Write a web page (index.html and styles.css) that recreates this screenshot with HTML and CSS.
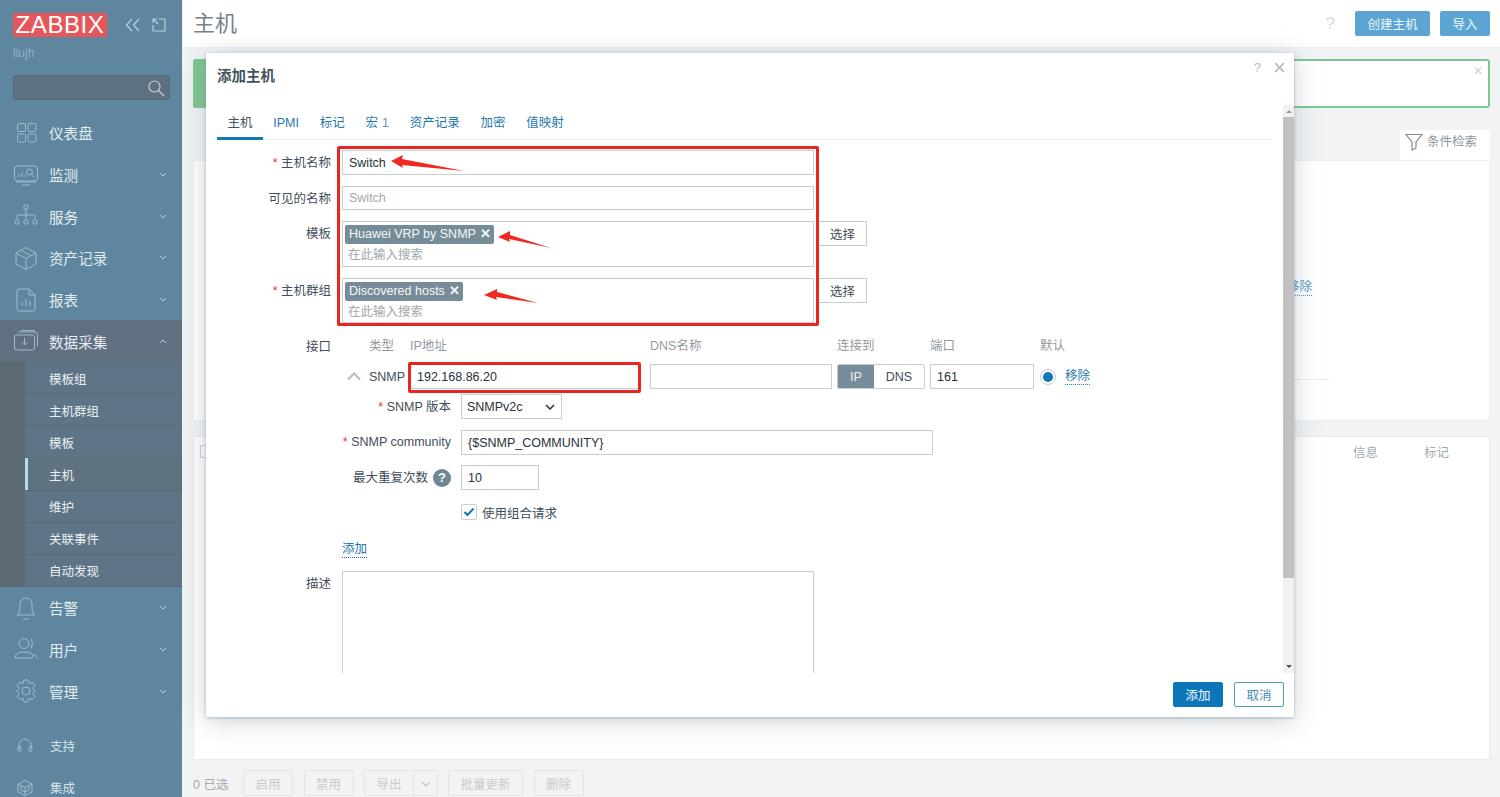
FILE: index.html
```html
<!DOCTYPE html>
<html lang="zh">
<head>
<meta charset="utf-8">
<title>主机</title>
<link rel="stylesheet" href="styles.css">
</head>
<body>
<div class="page">
  <aside class="sidebar">
    <div class="brand">
      <div class="logo">ZABBIX</div>
      <svg class="brand-ic" width="16" height="14" viewBox="0 0 16 14"><path d="M7 1 1.500 7 7 13M14 1 8.500 7 14 13"/></svg>
      <svg class="brand-ic expand" width="14" height="14" viewBox="0 0 14 14"><path d="M7 1h6v12H1V7M1 1l5 5M1 1h4M1 1v4"/></svg>
    </div>
    <div class="user">liujh</div>
    <div class="search">
      <svg width="18" height="18" viewBox="0 0 18 18"><circle cx="7.500" cy="7.500" r="5.500"/><path d="m11.500 11.500 5.500 5.500"/></svg>
    </div>
    <nav class="menu">
      <a class="mi"><svg class="ic" viewBox="0 0 24 24"><rect x="3.500" y="2.500" width="8" height="8" rx="1.500"/><rect x="14" y="2.500" width="8" height="8" rx="1.500"/><rect x="3.500" y="13" width="8" height="8" rx="1.500"/><rect x="14" y="13" width="8" height="8" rx="1.500"/></svg><span>仪表盘</span></a>
      <a class="mi"><svg class="ic" viewBox="0 0 24 24"><rect x=".5" y="3" width="23" height="15" rx="3"/><path d="M8 22h8M5 14v-3M8 14V9.500M11 14v-2M2 19h20"/><circle cx="15.500" cy="9" r="3"/><path d="m17.500 11.500 2.500 2.500"/></svg><span>监测</span><svg class="chev" viewBox="0 0 8 5"><path d="m1 1 3 3 3-3"/></svg></a>
      <a class="mi"><svg class="ic" viewBox="0 0 24 24"><rect x="10" y="1" width="4" height="4" rx="1"/><path d="M12 5v6M3 15v-3q0-1 1-1h16q1 0 1 1v3M12 11v4"/><rect x="1" y="16" width="4" height="4" rx="1"/><rect x="10" y="16" width="4" height="4" rx="1"/><rect x="19" y="16" width="4" height="4" rx="1"/></svg><span>服务</span><svg class="chev" viewBox="0 0 8 5"><path d="m1 1 3 3 3-3"/></svg></a>
      <a class="mi"><svg class="ic" viewBox="0 0 24 24"><path d="M12 1.500 22 7v11l-10 5.500L2 18V7zM2 7l10 5.500L22 7M12 12.500v11M7 4.300l10 5.500"/></svg><span>资产记录</span><svg class="chev" viewBox="0 0 8 5"><path d="m1 1 3 3 3-3"/></svg></a>
      <a class="mi"><svg class="ic" viewBox="0 0 24 24"><path d="M5 1h10l6 6v14q0 2-2 2H5q-2 0-2-2V3q0-2 2-2zM15 1v6h6M8 18v-4M12 18v-7M16 18v-5"/></svg><span>报表</span><svg class="chev" viewBox="0 0 8 5"><path d="m1 1 3 3 3-3"/></svg></a>
      <a class="mi active"><svg class="ic" viewBox="0 0 24 24"><rect x=".5" y="6" width="20" height="15" rx="2"/><path d="M4 3h17q2.500 0 2.500 2.500V17M7 1.500h14M10.500 9v7M7.500 13l3 3 3-3"/></svg><span>数据采集</span><svg class="chev" viewBox="0 0 8 5"><path d="m1 4 3-3 3 3"/></svg></a>
      <div class="sub">
        <a class="si">模板组</a>
        <a class="si">主机群组</a>
        <a class="si">模板</a>
        <a class="si cur">主机</a>
        <a class="si">维护</a>
        <a class="si">关联事件</a>
        <a class="si">自动发现</a>
      </div>
      <a class="mi"><svg class="ic" viewBox="0 0 24 24"><path d="M3 19q3-2 3-6V8a6 6 0 0 1 12 0v5q0 4 3 6zM9 22.500q3 1.500 6 0"/></svg><span>告警</span><svg class="chev" viewBox="0 0 8 5"><path d="m1 1 3 3 3-3"/></svg></a>
      <a class="mi"><svg class="ic" viewBox="0 0 24 24"><circle cx="10" cy="6.500" r="5"/><path d="M1 21q0-6 9-6t9 4q0 2-2 2zM17 1.500q3 5 0 10M20 17l3.500 4.500"/></svg><span>用户</span><svg class="chev" viewBox="0 0 8 5"><path d="m1 1 3 3 3-3"/></svg></a>
      <a class="mi"><svg class="ic" viewBox="0 0 24 24"><circle cx="12" cy="12" r="4"/><path d="M10 1h4l1 3.500 3.500-1 2.500 3-2.500 3 3 2.500-3 2.500 2.500 3-2.500 3-3.500-1-1 3.500h-4l-1-3.500-3.500 1-2.500-3 2.500-3-3-2.500 3-2.500-2.500-3 2.500-3 3.500 1z"/></svg><span>管理</span><svg class="chev" viewBox="0 0 8 5"><path d="m1 1 3 3 3-3"/></svg></a>
    </nav>
    <div class="bottom">
      <a class="bi"><svg class="ic-s" viewBox="0 0 16 16"><path d="M2 11V7a6 6 0 0 1 12 0v4"/><rect x="1" y="8.500" width="3" height="5" rx="1.500"/><rect x="12" y="8.500" width="3" height="5" rx="1.500"/></svg><span>支持</span></a>
      <a class="bi"><svg class="ic-s" viewBox="0 0 16 16"><path d="M8 .5 15 4v8l-7 3.500L1 12V4zM1 4l7 3.500L15 4M8 7.500v8M4 6v4l4 2 4-2V6"/></svg><span>集成</span></a>
    </div>
  </aside>

  <main class="main">
    <header class="topbar">
      <h1 class="title">主机</h1>
      <div class="top-actions">
        <span class="qm">?</span>
        <button class="btn-top wide">创建主机</button>
        <button class="btn-top">导入</button>
      </div>
    </header>
    <div class="content">
      <div class="msg"><i class="msg-bar"></i><span class="msg-x">✕</span></div>
      <div class="filter-tab">
        <svg width="18" height="18" viewBox="0 0 18 18"><path d="M1 1.500h16L11 9v6l-4 2V9z"/></svg>
        <span>条件检索</span>
      </div>
      <div class="filter-body">
        <span class="behind-link">移除</span>
        <i class="behind-line"></i>
      </div>
      <div class="table">
        <div class="thead"><span class="chk"></span><span class="th th1">信息</span><span class="th">标记</span></div>
      </div>
      <div class="actions">
        <span class="count">0 已选</span>
        <button class="ghost">启用</button>
        <button class="ghost">禁用</button>
        <div class="split"><button class="ghost left">导出</button><button class="ghost right"><svg width="10" height="6" viewBox="0 0 10 6"><path d="m1 1 4 4 4-4"/></svg></button></div>
        <button class="ghost long">批量更新</button>
        <button class="ghost">删除</button>
      </div>
    </div>
  </main>

  <section class="modal">
    <div class="m-head">
      <h2>添加主机</h2>
      <div class="m-tools"><span>?</span><svg width="11" height="11" viewBox="0 0 11 11"><path d="m1 1 9 9M10 1l-9 9"/></svg></div>
    </div>
    <div class="m-body">
      <div class="m-scroll">
        <div class="tabs">
          <a class="tab on">主机</a><a class="tab">IPMI</a><a class="tab">标记</a><a class="tab">宏 <em>1</em></a><a class="tab">资产记录</a><a class="tab">加密</a><a class="tab">值映射</a>
        </div>
        <div class="form">
          <div class="row"><label class="lbl"><b>*</b> 主机名称</label><div class="field"><div class="inp w472">Switch</div></div></div>
          <div class="row"><label class="lbl">可见的名称</label><div class="field"><div class="inp w472 short ph">Switch</div></div></div>
          <div class="row"><label class="lbl">模板</label><div class="field wb"><div class="multi"><span class="tag">Huawei VRP by SNMP <i>✕</i></span><span class="hint">在此输入搜索</span></div><button class="pick">选择</button></div></div>
          <div class="row"><label class="lbl"><b>*</b> 主机群组</label><div class="field wb"><div class="multi"><span class="tag">Discovered hosts <i>✕</i></span><span class="hint">在此输入搜索</span></div><button class="pick">选择</button></div></div>
          <div class="iface">
            <label class="lbl">接口</label>
            <div class="if-grid">
              <span></span><span class="h">类型</span><span class="h">IP地址</span><span class="h">DNS名称</span><span class="h">连接到</span><span class="h">端口</span><span class="h">默认</span><span></span>
              <svg class="collapse" width="14" height="9" viewBox="0 0 14 9"><path d="m1 7.500 6-6 6 6"/></svg>
              <span class="snmp">SNMP</span>
              <div class="inp ipw">192.168.86.20</div>
              <div class="inp dnsw"></div>
              <div class="seg"><span class="seg-on">IP</span><span>DNS</span></div>
              <div class="inp portw">161</div>
              <span class="radio"><i></i></span>
              <a class="link">移除</a>
            </div>
          </div>
          <div class="snmp-form">
            <label class="slbl"><b>*</b>&nbsp;SNMP 版本</label>
            <div class="sel">SNMPv2c<svg width="10" height="6" viewBox="0 0 10 6"><path d="m1 1 4 4 4-4"/></svg></div>
            <label class="slbl"><b>*</b>&nbsp;SNMP community</label>
            <div class="inp comm">{$SNMP_COMMUNITY}</div>
            <label class="slbl">最大重复次数<span class="help">?</span></label>
            <div class="inp num">10</div>
            <span></span>
            <div class="check"><span class="box"><svg width="12" height="10" viewBox="0 0 12 10"><path d="m1.500 5 3 3 6-6.500"/></svg></span>使用组合请求</div>
          </div>
          <div class="add-row"><a class="link">添加</a></div>
          <div class="row desc"><label class="lbl">描述</label><div class="field"><div class="area"></div></div></div>
        </div>
      </div>
      <div class="sbar"><i class="up"></i><div class="track"><div class="thumb"></div></div><i class="down"></i></div>
    </div>
    <div class="m-foot"><button class="primary">添加</button><button class="cancel">取消</button></div>
  </section>

  <div class="mark mark-a"></div>
  <div class="mark mark-b"></div>
  <svg class="arrows" width="1500" height="797" viewBox="0 0 1500 797">
    <polygon points="391,161 403,155 402,159 464,171 402,165 403,168"/>
    <polygon points="498,237 510,231 510,235 551,248 509,239 510,242"/>
    <polygon points="484,295 497,289 497,292 538,303 496,297 497,300"/>
  </svg>
</div>
</body>
</html>
```
FILE: styles.css
```css
* { box-sizing: border-box; }
html, body { margin: 0; height: 100%; }
body { font-family: "Liberation Sans", "Noto Sans CJK SC", sans-serif; font-size: 12.500px; color: #3b4a55; overflow: hidden; }
button { font: inherit; }
.page { position: relative; display: flex; width: 1500px; height: 797px; overflow: hidden; background: #f1f3f5; }

/* sidebar */
.sidebar { width: 183px; flex: none; height: 797px; display: flex; flex-direction: column; background: #5e879f; border-right: 1px solid #eef1f3; color: #e4ecf0; overflow: hidden; }
.sidebar > * { flex: none; }
.brand { display: flex; align-items: center; height: 24px; margin: 13px 0 0 13px; }
.logo { width: 94px; height: 24px; background: #e6575b; color: #fff; font-size: 24px; line-height: 24px; text-align: center; letter-spacing: .6px; }
.brand-ic { margin-left: 18px; fill: none; stroke: #b9ced9; stroke-width: 1.200; }
.brand-ic.expand { margin-left: 11px; }
.user { margin: 8px 0 0 13px; height: 16px; font-size: 12px; line-height: 16px; color: #93b2c3; }
.search { display: flex; align-items: center; justify-content: flex-end; width: 157px; height: 25px; margin: 14px 0 0 13px; padding-right: 4px; background: #5e7180; border: 1px solid #55697a; border-radius: 3px; }
.search svg { fill: none; stroke: #c3d2da; stroke-width: 1.200; }
.menu { margin-top: 12px; display: flex; flex-direction: column; }
.mi { display: flex; flex: none; align-items: center; height: 41.700px; padding-left: 14px; font-size: 14.600px; color: #e4ecf0; }
.mi span { margin-left: 11px; }
.mi.active { background: #607080; }
.ic { width: 24px; height: 24px; flex: none; fill: none; stroke: #a5c2d0; stroke-width: .9; }
.chev { width: 8px; height: 5px; margin-left: auto; margin-right: 15px; fill: none; stroke: #bdd0da; stroke-width: 1; }
.sub { display: flex; flex: none; flex-direction: column; padding-left: 25px; background: #5c6a73; }
.si { display: flex; flex: none; align-items: center; height: 32.100px; padding: 1px 0 0 24px; background: #5f7587; border-bottom: 1px solid #596a79; color: #eaf0f3; font-size: 12.500px; }
.si.cur { background: #5f7280; box-shadow: inset 3px 0 0 #b5dcf0; }
.bottom { margin-top: 13px; display: flex; flex-direction: column; }
.bi { display: flex; flex: none; align-items: center; height: 42px; padding-left: 17px; font-size: 12.500px; color: #d6e2e8; }
.bi span { margin-left: 17px; }
.ic-s { width: 16px; height: 16px; flex: none; fill: none; stroke: #a5c2d0; stroke-width: .9; }

/* main */
.main { flex: 1; min-width: 0; display: flex; flex-direction: column; }
.topbar { display: flex; align-items: center; justify-content: space-between; height: 48px; flex: none; padding: 0 10px; background: #fff; border-bottom: 1px solid #ebeef0; }
.title { margin: 0; font-size: 22px; font-weight: 400; line-height: 1; color: #76838c; }
.top-actions { display: flex; align-items: center; }
.qm { font-size: 17px; color: #d5dadd; margin-right: 20px; }
.btn-top { width: 50px; height: 25px; padding: 0; margin-left: 10px; border: 0; border-radius: 2px; background: #5ca5d3; color: #eef6fb; }
.btn-top.wide { width: 75px; margin-left: 0; }
.content { flex: 1; display: flex; flex-direction: column; padding: 11px 10px 0; }
.msg { position: relative; height: 49px; flex: none; background: #fff; border: 2px solid #7cc68f; border-radius: 3px; }
.msg-bar { position: absolute; left: -2px; top: -2px; bottom: -2px; width: 14px; background: #7cc68f; border-radius: 3px 0 0 3px; }
.msg-x { position: absolute; right: 5px; top: 3px; font-size: 12px; color: #c9d2d8; }
.filter-tab { align-self: flex-end; display: flex; align-items: flex-start; gap: 4px; width: 90px; height: 30px; margin-top: 22px; padding: 3px 0 0 5px; background: #fff; color: #8a959c; flex: none; line-height: 18px; }
.filter-tab svg { fill: none; stroke: #7e8d96; stroke-width: 1.200; flex: none; }
.filter-body { position: relative; height: 261px; flex: none; background: #fff; border: 1px solid #eceff1; }
.behind-link { position: absolute; left: 1093px; top: 118px; color: #4e96c8; border-bottom: 1px dotted #4e96c8; line-height: 16px; }
.behind-line { position: absolute; left: 1100px; right: 160px; top: 218px; height: 1px; background: #eceff1; }
.table { height: 324px; margin-top: 15px; flex: none; background: #fff; border: 1px solid #e9ecee; }
.thead { display: flex; align-items: center; height: 29px; color: #a2abb2; padding-right: 40px; }
.chk { width: 13px; height: 13px; margin-left: 6px; border: 1px solid #c9d0d5; background: #fff; }
.th1 { margin-left: auto; margin-right: 46px; }
.actions { display: flex; align-items: center; margin-top: 10px; color: #a2abb2; }
.count { width: 50px; flex: none; }
.ghost { width: 50px; height: 26px; padding: 0; margin-right: 10.500px; background: #f1f3f5; border: 1px solid #e3e6e9; border-radius: 2px; color: #c6ccd1; }
.ghost.long { width: 75px; }
.split { display: flex; margin-right: 10px; }
.ghost.left { margin: 0; border-radius: 2px 0 0 2px; }
.ghost.right { width: 24px; margin: 0; border-left: 0; border-radius: 0 2px 2px 0; }
.ghost svg { fill: none; stroke: #bcc3c8; stroke-width: 1.200; }

/* modal */
.modal { position: absolute; left: 206px; top: 53px; width: 1088px; height: 664px; display: flex; flex-direction: column; background: #fff; box-shadow: 0 1px 3px rgba(120, 140, 155, .5), 0 4px 24px rgba(120, 140, 155, .38); }
.m-head { position: relative; height: 52px; flex: none; padding: 14px 11px 0; }
.m-head h2 { margin: 0; font-size: 14.500px; line-height: 18px; font-weight: 700; color: #43525d; }
.m-tools { position: absolute; right: 9px; top: 7px; display: flex; align-items: center; gap: 13px; color: #b2bcc3; font-size: 13px; }
.m-tools svg { fill: none; stroke: #a9b5bc; stroke-width: 1.500; }
.m-body { flex: 1; min-height: 0; display: flex; }
.m-scroll { flex: 1; min-width: 0; overflow: hidden; padding-left: 11px; }
.sbar { width: 11px; flex: none; display: flex; flex-direction: column; background: #f1f1f1; }
.sbar .up { height: 12px; position: relative; }
.sbar .up::after { content: ""; position: absolute; left: 3px; top: 5px; border: 3px solid transparent; border-top: 0; border-bottom: 3px solid #9a9a9a; }
.sbar .down { height: 12px; position: relative; }
.sbar .down::after { content: ""; position: absolute; left: 3px; top: 4px; border: 3px solid transparent; border-bottom: 0; border-top: 3px solid #505050; }
.track { flex: 1; }
.thumb { height: 461px; background: #c1c1c1; }
.tabs { display: flex; height: 35px; width: 1055px; border-bottom: 1px solid #ebeef0; }
.tab { display: flex; align-items: flex-start; height: 35px; padding: 10px 10.400px 0; line-height: 17px; color: #1f78ad; }
.tab em { font-style: normal; color: #6d8ea3; margin-left: 4px; }
.tab.on { color: #43525d; border-bottom: 3px solid #0f78b6; }
.form { padding-top: 10px; }
.row { display: flex; margin-bottom: 11px; }
.lbl { width: 114px; height: 24px; padding-top: 1px; flex: none; text-align: right; line-height: 24px; color: #3f4e59; }
.lbl b, .slbl b { color: #e33734; font-weight: 400; }
.field { margin-left: 11px; display: flex; align-items: flex-start; }
.wb { gap: 4px; }
.inp { height: 25px; padding-left: 6px; line-height: 24px; background: #fff; border: 1px solid #c7cfd4; color: #26323a; }
.w472 { width: 472px; }
.short { height: 24px; line-height: 22px; }
.ph { color: #a0a8ae; }
.multi { width: 472px; height: 45.500px; padding: 3px 2px 0; display: flex; flex-direction: column; align-items: flex-start; background: #fff; border: 1px solid #c7cfd4; }
.tag { height: 19px; padding: 0 3px 0 4px; line-height: 19px; background: #768d99; color: #f4f7f8; border-radius: 2px; white-space: nowrap; }
.tag i { font-style: normal; font-size: 12.500px; font-weight: 700; margin-left: 1px; }
.hint { margin: 2px 0 0 3px; line-height: 18px; color: #a0a8ae; }
.pick { width: 49px; height: 25px; padding: 0; background: #fff; border: 1px solid #c7cfd4; color: #3f4e59; }
.iface { display: flex; margin-top: 11px; }
.if-grid { margin-left: 11px; display: grid; grid-template-columns: 27px 41px 240px 187px 93px 110px 25px 40px; grid-template-rows: 30px 25px; align-items: center; }
.if-grid .h { color: #8f9aa2; line-height: 16px; align-self: start; margin-top: 4px; white-space: nowrap; }
.collapse { margin-left: 5px; fill: none; stroke: #aebcc4; stroke-width: 2; }
.snmp { color: #3f4e59; }
.ipw { width: 230px; }
.dnsw { width: 182px; }
.portw { width: 104px; }
.seg { display: flex; width: 88px; height: 25px; border: 1px solid #c7cfd4; border-radius: 2px; overflow: hidden; }
.seg span { flex: 1; display: flex; align-items: center; justify-content: center; color: #3f4e59; }
.seg .seg-on { flex: none; width: 36px; background: #768d99; color: #eef2f4; }
.radio { display: flex; align-items: center; justify-content: center; width: 16px; height: 16px; border: 1px solid #c7cfd4; border-radius: 50%; background: #fff; }
.radio i { width: 10px; height: 10px; background: #0f78b6; border-radius: 50%; }
.link { color: #1f78ad; border-bottom: 1px dotted #1f78ad; line-height: 15px; justify-self: start; }
.if-grid .link { margin-top: 1px; }
.snmp-form { display: grid; grid-template-columns: 234px 1fr; column-gap: 10px; grid-auto-rows: 25px; row-gap: 10.500px; margin-top: 5px; align-items: center; justify-items: start; }
.slbl { justify-self: end; line-height: 24px; color: #3f4e59; display: flex; align-items: center; white-space: pre; }
.sel { display: flex; align-items: center; justify-content: space-between; width: 101px; height: 25px; padding: 0 6px 0 5px; background: #fff; border: 1px solid #c7cfd4; color: #26323a; }
.sel svg { fill: none; stroke: #26323a; stroke-width: 1.500; }
.comm { width: 472px; }
.num { width: 78px; }
.help { display: inline-flex; align-items: center; justify-content: center; width: 18px; height: 18px; margin-left: 5px; border-radius: 50%; background: #6f8693; color: #fff; font-size: 13px; font-weight: 700; }
.check { display: flex; align-items: center; gap: 5px; margin-top: -2px; color: #3f4e59; }
.box { display: flex; align-items: center; justify-content: center; width: 16px; height: 16px; background: #fff; border: 1px solid #c7cfd4; border-radius: 2px; }
.box svg { fill: none; stroke: #0f78b6; stroke-width: 2; }
.add-row { margin: 16px 0 0 125px; height: 24px; }
.add-row .link { display: inline-block; }
.desc { margin-top: 5px; }
.area { width: 472px; height: 120px; border: 1px solid #c7cfd4; background: #fff; }
.m-foot { height: 44px; flex: none; display: flex; justify-content: flex-end; gap: 11px; padding: 9px 10px 0 0; }
.primary, .cancel { width: 50px; height: 25px; padding: 0; border-radius: 2px; }
.primary { background: #0b76b8; border: 1px solid #0b76b8; color: #f2f8fb; }
.cancel { background: #fff; border: 1px solid #4d9bc9; color: #4b8cb3; }

/* annotations */
.mark { position: absolute; border: 3px solid #e8261f; border-radius: 2px; }
.mark-a { left: 337px; top: 146px; width: 482px; height: 180px; }
.mark-b { left: 408px; top: 362px; width: 233px; height: 31px; }
.arrows { position: absolute; left: 0; top: 0; fill: #ef2a20; pointer-events: none; }
```
